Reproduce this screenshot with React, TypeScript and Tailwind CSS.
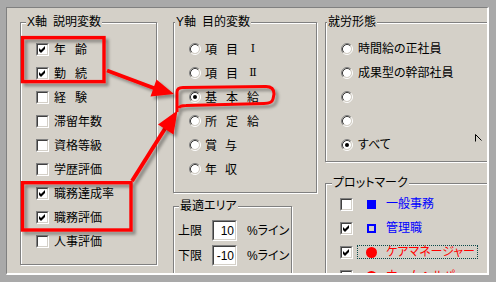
// 分析条件パネル (Win classic 風)
import type { ReactNode } from "react";

const PALT = "[font-feature-settings:'palt']";

function CheckBox({ checked }: { checked?: boolean }) {
  return (
    <span className="block w-[13px] h-[13px] shrink-0 border border-t-[#808080] border-l-[#808080] border-r-white border-b-white">
      <span className="block w-full h-full border border-t-[#404040] border-l-[#404040] border-r-[#d4d0c8] border-b-[#d4d0c8] bg-white">
        {checked && (
          <svg width="9" height="9" viewBox="0 0 9 9" className="block">
            <polygon points="1,3 3,5 7,1 7,4 3,8 1,6" fill="#000" />
          </svg>
        )}
      </span>
    </span>
  );
}

function Radio({ checked }: { checked?: boolean }) {
  return (
    <svg width="12" height="12" viewBox="0 0 12 12" className="block shrink-0">
      <circle cx="6" cy="6" r="4" fill="#fff" />
      <path d="M2.11 9.89A5.5 5.5 0 0 1 9.89 2.11" fill="none" stroke="#808080" />
      <path d="M9.89 2.11A5.5 5.5 0 0 1 2.11 9.89" fill="none" stroke="#fff" />
      <path d="M2.82 9.18A4.5 4.5 0 0 1 9.18 2.82" fill="none" stroke="#404040" />
      <path d="M9.18 2.82A4.5 4.5 0 0 1 2.82 9.18" fill="none" stroke="#d4d0c8" />
      {checked && <circle cx="6" cy="6" r="2" fill="#000" />}
    </svg>
  );
}

// 文字間を空けたラベル (例: "年 齢")。ローマ数字はセリフ体で
function Spaced({ text, gap = "gap-[9px]" }: { text: string; gap?: string }) {
  return (
    <span className={`flex ${gap}`}>
      {text.split(" ").map((c, i) =>
        c === "Ⅰ" || c === "Ⅱ" ? (
          <span key={i} className="w-[12px] text-center font-['DejaVu_Serif','Liberation_Serif',serif] text-[11px]">
            {c}
          </span>
        ) : (
          <span key={i} className="font-['Noto_Sans_CJK_JP',sans-serif]">
            {c}
          </span>
        )
      )}
    </span>
  );
}

function Group({
  title,
  titlePos,
  className,
  children,
}: {
  title: ReactNode;
  titlePos: string;
  className: string;
  children?: ReactNode;
}) {
  return (
    <div
      className={`relative shrink-0 border border-[#808080] shadow-[inset_1px_1px_0_#fff,1px_1px_0_#fff] ${className}`}
    >
      <span
        className={`absolute top-[-8px] flex bg-[#d4d0c8] px-[1px] leading-[14px] whitespace-nowrap ${titlePos}`}
      >
        {title}
      </span>
      {children}
    </div>
  );
}

function Edit({ value }: { value: string }) {
  return (
    <span className="block w-[25px] h-[21px] shrink-0 border border-t-[#808080] border-l-[#808080] border-r-white border-b-white">
      <span className="flex items-center justify-end w-full h-full pr-[1px] border border-t-[#404040] border-l-[#404040] border-r-[#d4d0c8] border-b-[#d4d0c8] bg-white">
        {value}
      </span>
    </span>
  );
}

const xVars = [
  { label: "年 齢", checked: true },
  { label: "勤 続", checked: true },
  { label: "経 験" },
  { label: "滞留年数" },
  { label: "資格等級" },
  { label: "学歴評価" },
  { label: "職務達成率", checked: true },
  { label: "職務評価", checked: true },
  { label: "人事評価" },
];

const yVars = [
  { label: "項 目 Ⅰ" },
  { label: "項 目 Ⅱ" },
  { label: "基 本 給", checked: true },
  { label: "所 定 給" },
  { label: "賞 与", gap: "gap-[8px]" },
  { label: "年 収", gap: "gap-[8px]" },
];

const workTypes = [
  { label: "時間給の正社員" },
  { label: "成果型の幹部社員" },
  { label: "" },
  { label: "" },
  { label: "すべて", checked: true },
];

function Mark({ kind }: { kind: "fillSq" | "sq" | "fillCircle" | "circle" }) {
  return (
    <span className="flex items-center justify-center w-[11px] h-[11px] shrink-0">
      {kind === "fillSq" && <span className="block w-[9px] h-[9px] bg-[#0000ff]" />}
      {kind === "sq" && <span className="block w-[9px] h-[9px] border-2 border-[#0000ff]" />}
      {kind === "fillCircle" && <span className="block w-[11px] h-[11px] rounded-full bg-[#ff0000]" />}
      {kind === "circle" && <span className="block w-[11px] h-[11px] rounded-full border-2 border-[#ff0000]" />}
    </span>
  );
}

const plotMarks = [
  { label: "一般事務", mark: "fillSq" as const, color: "text-[#0000ff]" },
  { label: "管理職", mark: "sq" as const, color: "text-[#0000ff]", checked: true },
  { label: "ケアマネージャー", mark: "fillCircle" as const, color: "text-[#ff0000]", checked: true, focus: true },
  { label: "ホームヘルパー", mark: "circle" as const, color: "text-[#ff0000]" },
];

export default function App() {
  return (
    <div className="relative w-[496px] h-[282px] bg-[#a9a9a9] pt-[7px] pl-[6px] pr-[7px] pb-[7px] text-[12px] leading-[14px] text-black font-['Liberation_Sans','Noto_Sans_CJK_JP',sans-serif]">
      <div className="h-full overflow-hidden bg-[#d4d0c8] border-t border-l border-r-2 border-b-2 border-t-[#808080] border-l-[#808080] border-r-white border-b-white">
        <div className="flex pl-[13px] pt-[14px]">
          {/* X軸 */}
          <Group
            className="w-[137px] h-[243px] pl-[15px] pt-[14px]"
            titlePos="left-[5px]"
            title={
              <>
                <span>X軸</span>
                <span className="ml-[6px]">説明変数</span>
              </>
            }
          >
            {xVars.map((v) => (
              <div key={v.label} className="flex items-center h-[24px]">
                <CheckBox checked={v.checked} />
                <span className="ml-[5px]">
                  <Spaced text={v.label} />
                </span>
              </div>
            ))}
          </Group>

          {/* Y軸 + 最適エリア */}
          <div className="ml-[16px] shrink-0">
            <Group
              className="w-[144px] h-[171px] pl-[15px] pt-[14px]"
              titlePos="left-[1px]"
              title={
                <>
                  <span>Y軸</span>
                  <span className="ml-[6px]">目的変数</span>
                </>
              }
            >
              {yVars.map((v) => (
                <div key={v.label} className="flex items-center h-[24px]">
                  <Radio checked={v.checked} />
                  <span className="ml-[4px]">
                    <Spaced text={v.label} gap={v.gap} />
                  </span>
                </div>
              ))}
            </Group>

            <Group
              className="mt-[13px] w-[119px] h-[90px] pl-[4px] pt-[13px]"
              titlePos="left-[5px]"
              title={<span className={PALT}>最適エリア</span>}
            >
              <div className="flex flex-col gap-[4px]">
                {[
                  { label: "上限", value: "10" },
                  { label: "下限", value: "-10" },
                ].map((r) => (
                  <div key={r.label} className="flex items-center h-[21px]">
                    <span className="w-[24px]">{r.label}</span>
                    <span className="ml-[10px]">
                      <Edit value={r.value} />
                    </span>
                    <span className={`ml-[10px] ${PALT}`}>%ライン</span>
                  </div>
                ))}
              </div>
            </Group>
          </div>

          {/* 就労形態 + プロットマーク */}
          <div className="ml-[8px] shrink-0">
            <Group
              className="w-[190px] h-[140px] pl-[15px] pt-[14px]"
              titlePos="left-[1px]"
              title={<span>就労形態</span>}
            >
              {workTypes.map((w, i) => (
                <div key={i} className="flex items-center h-[24px]">
                  <Radio checked={w.checked} />
                  <span className={`ml-[5px] ${PALT}`}>{w.label}</span>
                </div>
              ))}
            </Group>

            <Group
              className="mt-[21px] w-[190px] h-[110px] pl-[14px] pt-[8px]"
              titlePos="left-[6px]"
              title={<span className={PALT}>プロットマーク</span>}
            >
              {plotMarks.map((p) => (
                <div key={p.label} className="flex items-center h-[24px]">
                  <CheckBox checked={p.checked} />
                  <span
                    className={`ml-[4px] flex items-center h-[14px] pl-[8px] pr-[2px] border border-dotted ${
                      p.focus ? "border-[#0a4a4a]" : "border-transparent"
                    }`}
                  >
                    <Mark kind={p.mark} />
                    <span className={`ml-[9px] ${p.color} ${PALT}`}>{p.label}</span>
                  </span>
                </div>
              ))}
            </Group>
          </div>
        </div>
      </div>

      {/* 赤い注釈 */}
      <svg
        className="absolute inset-0 pointer-events-none"
        width="496"
        height="282"
        viewBox="0 0 496 282"
      >
        <defs>
          <filter id="shadow" x="-20%" y="-20%" width="150%" height="150%">
            <feDropShadow dx="3" dy="3" stdDeviation="1.5" floodColor="#000" floodOpacity="0.35" />
          </filter>
        </defs>
        <g filter="url(#shadow)" fill="none" stroke="#ff0000">
          <rect x="22.5" y="37.6" width="81.5" height="44" strokeWidth="3.4" />
          <rect x="22.5" y="182.7" width="108.5" height="47.3" strokeWidth="3.4" />
          <path
            d="M177 112 L177 92 Q177 87.5 183 87.5 L266 86.5 Q274 86.5 274 94 L273 99 Q272 103.5 264 103.5 L186 105.5 Q180 105.5 179 108"
            strokeWidth="3"
            strokeLinejoin="round"
          />
          <line x1="107" y1="70.5" x2="155" y2="88.5" strokeWidth="4" />
          <line x1="132" y1="181" x2="166" y2="127" strokeWidth="4" />
        </g>
        <g filter="url(#shadow)" fill="#ff0000">
          <polygon points="174,94 150.5,96.5 156.5,79.5" />
          <polygon points="177.5,110.5 158,124.5 173.5,134.5" />
        </g>
        {/* カーソル */}
        <path d="M475.5 134.5 V141.5 M475.5 134.5 L481.5 140.5" stroke="#000" fill="none" />
      </svg>
    </div>
  );
}
